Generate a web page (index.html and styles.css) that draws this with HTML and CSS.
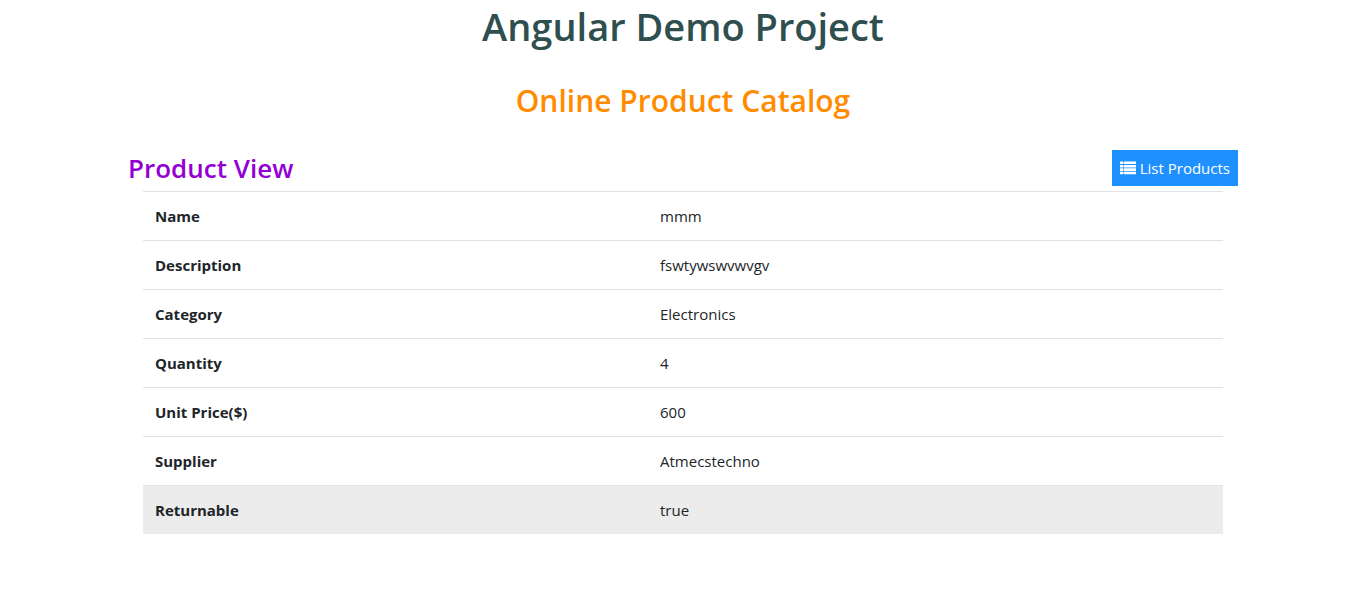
FILE: index.html
```
<!DOCTYPE html>
<html lang="en">
<head>
<meta charset="utf-8">
<meta name="viewport" content="width=device-width, initial-scale=1">
<title>Angular Demo Project</title>
<link rel="stylesheet" href="styles.css">
</head>
<body>
<h1 class="site-title">Angular Demo Project</h1>
<h2 class="site-subtitle">Online Product Catalog</h2>
<main class="container">
  <div class="toolbar">
    <h3 class="view-title">Product View</h3>
    <button class="list-button" type="button">
      <svg class="list-icon" viewBox="0 0 16 14" aria-hidden="true">
        <path d="M0 .5h3v2.6H0zM3.6 .5H16v2.6H3.6zM0 3.9h3v2.6H0zM3.6 3.9H16v2.6H3.6zM0 7.3h3v2.6H0zM3.6 7.3H16v2.6H3.6zM0 10.7h3v2.6H0zM3.6 10.7H16v2.6H3.6z"/>
      </svg>
      <span>List Products</span>
    </button>
  </div>
  <table class="product-table">
    <tbody>
      <tr><th scope="row">Name</th><td>mmm</td></tr>
      <tr><th scope="row">Description</th><td>fswtywswvwvgv</td></tr>
      <tr><th scope="row">Category</th><td>Electronics</td></tr>
      <tr><th scope="row">Quantity</th><td>4</td></tr>
      <tr><th scope="row">Unit Price($)</th><td>600</td></tr>
      <tr><th scope="row">Supplier</th><td>Atmecstechno</td></tr>
      <tr class="highlighted"><th scope="row">Returnable</th><td>true</td></tr>
    </tbody>
  </table>
</main>
</body>
</html>
```
FILE: styles.css
```
* { box-sizing: border-box; }
body {
  margin: 0;
  background: #fff;
  color: #212529;
  font: 400 15px/24px "Segoe UI", "Open Sans", "Noto Sans", sans-serif;
}
h1, h2, h3 { margin: 0; font-weight: 600; }
.site-title {
  color: darkslategray;
  font-size: 38px;
  line-height: 48px;
  padding-top: 2px;
  text-align: center;
}
.site-subtitle {
  margin-top: 32px;
  color: darkorange;
  font-size: 30px;
  line-height: 38px;
  text-align: center;
}
.container {
  max-width: 1110px;
  margin: 30px auto 0;
}
.toolbar {
  display: flex;
  justify-content: space-between;
  align-items: center;
  height: 36px;
}
.view-title {
  color: darkviolet;
  font-size: 26px;
  line-height: 34px;
}
.list-button {
  display: flex;
  align-items: center;
  gap: 4px;
  height: 36px;
  padding: 0 8px;
  border: 0;
  background: dodgerblue;
  color: #fff;
  font: inherit;
  cursor: pointer;
}
.list-icon { width: 16px; height: 14px; fill: currentColor; }
.product-table {
  width: calc(100% - 30px);
  margin: 5px auto 0;
  border-collapse: collapse;
  table-layout: fixed;
}
.product-table th,
.product-table td {
  padding: 12px;
  border-top: 1px solid #dee2e6;
  text-align: left;
}
.product-table th { width: 505px; font-weight: 700; }
.highlighted { background: #ececec; }
```
